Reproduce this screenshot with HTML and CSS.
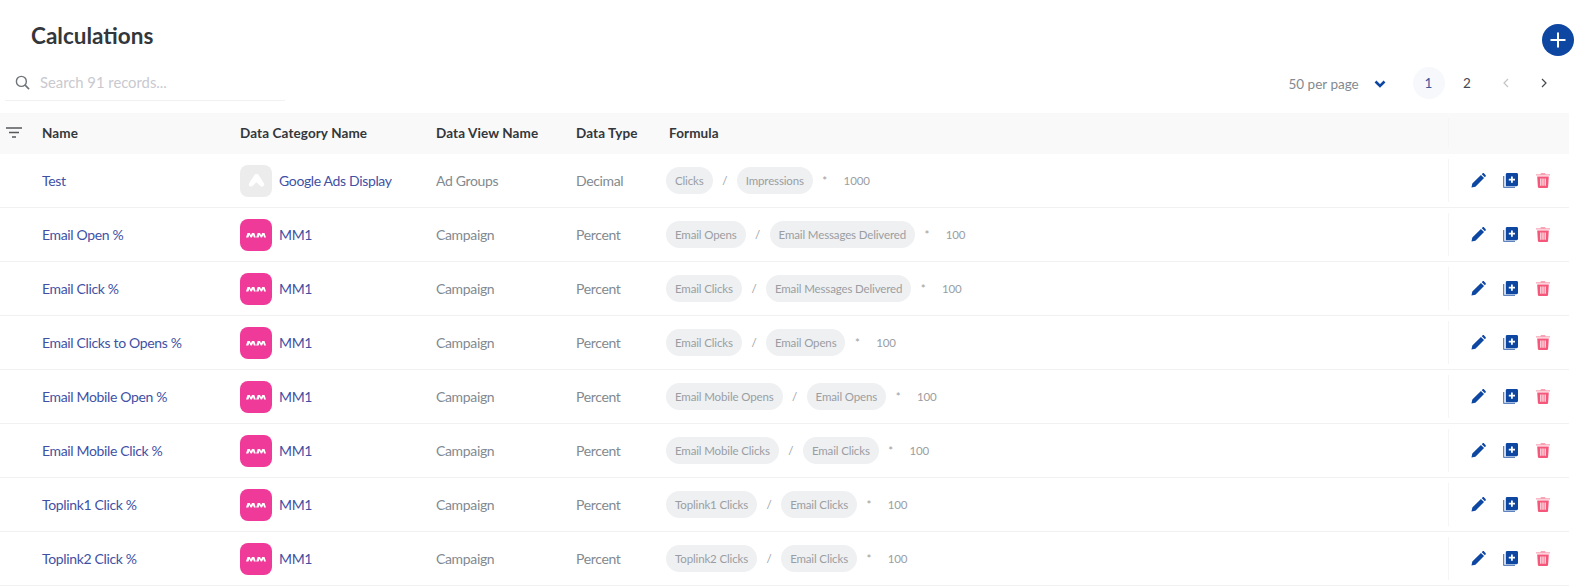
FILE: index.html
```html
<!DOCTYPE html>
<html lang="en">
<head>
<meta charset="utf-8">
<title>Calculations</title>
<link rel="stylesheet" href="styles.css">
</head>
<body>
<svg class="defs" width="0" height="0" aria-hidden="true">
  <symbol id="ic-pencil" viewBox="0 0 16 16"><path d="M0.500 15.500l0.900-4.200L10.600 2.100l3.300 3.300-9.200 9.200zM11.500 1.200l0.700-0.700c0.500-0.500 1.300-0.500 1.800 0l1.500 1.500c0.500 0.500 0.500 1.300 0 1.800l-0.700 0.700z" fill="currentColor"/></symbol>
  <symbol id="ic-copy" viewBox="0 0 15 15"><path d="M0 3h1.300v10.700H12V15H1.300C0.600 15 0 14.400 0 13.700z" fill="#5f83c0"/><path d="M4.200 0h9.400C14.400 0 15 0.600 15 1.400v10.400c0 0.800-0.600 1.400-1.400 1.400H2.800V1.400C2.800 0.600 3.400 0 4.200 0z" fill="currentColor"/><path d="M8 3.500h1.800v2.200H12v1.800H9.800v2.200H8V7.500H5.800V5.700H8z" fill="#fff"/></symbol>
  <symbol id="ic-trash" viewBox="0 0 14 15"><path d="M5 0h4l0.600 1.200H14v1.400H0V1.200h4.400z" fill="#f7a3b5"/><path d="M1.200 3.600h11.600l-0.700 10.100c-0.100 0.700-0.600 1.300-1.300 1.300H3.200c-0.700 0-1.200-0.600-1.300-1.300z" fill="currentColor"/><path d="M4.300 5.500h1.100v7.300H4.300zM6.450 5.500h1.100v7.300H6.450zM8.600 5.500h1.100v7.300H8.600z" fill="#fff"/></symbol>
  <symbol id="ic-mm" viewBox="0 0 32 32"><rect width="32" height="32" rx="8" fill="#ef3a9a"/><path d="M6 18.500L7.500 14h2.300l1.100 2.200L12 14h2.300l1.500 4.500h-1.900l-0.800-2.500-1.300 2.500h-1.200L9.300 16l-0.900 2.500zM16.200 18.500l1.500-4.500H20l1.100 2.200 1.100-2.200h2.300l1.500 4.500h-1.900l-0.800-2.500-1.300 2.500h-1.200L19.500 16l-0.900 2.500z" fill="#fff"/></symbol>
  <symbol id="ic-ads" viewBox="0 0 32 32"><rect width="32" height="32" rx="8" fill="#ececec"/><path d="M16.500 9c1 0 1.800 0.500 2.300 1.300l5 8c0.800 1.200 0.400 2.400-0.600 3-1 0.600-2.200 0.300-3-0.600l-3.700-3.400-3.700 3.400c-0.800 0.900-2 1.200-3 0.600-1-0.600-1.400-1.800-0.600-3l5-8c0.500-0.800 1.300-1.300 2.300-1.300z" fill="#fff"/></symbol>
</svg>

<main class="page">
  <header class="top">
    <h1 class="title">Calculations</h1>
    <button class="add" type="button" aria-label="Add">
      <svg width="16" height="16" viewBox="0 0 16 16"><path d="M7 0.500h2V7h6.500v2H9v6.500H7V9H0.500V7H7z" fill="#fff"/></svg>
    </button>
  </header>

  <div class="toolbar">
    <label class="search">
      <svg class="search-icon" width="15" height="15" viewBox="0 0 16 16"><circle cx="6.800" cy="6.800" r="5.300" fill="none" stroke="#6e7478" stroke-width="1.500"/><path d="M10.800 10.800l4.200 4.200" stroke="#6e7478" stroke-width="1.700" fill="none"/></svg>
      <span class="search-text">Search 91 records...</span>
    </label>
    <div class="pager">
      <span class="per-page">50 per page</span>
      <svg class="caret" width="12" height="8" viewBox="0 0 12 8"><path d="M1.500 1.500L6 6l4.500-4.500" fill="none" stroke="#0d47a1" stroke-width="2.600"/></svg>
      <span class="page-no current">1</span>
      <span class="page-no">2</span>
      <span class="page-no arrow disabled"><svg width="6" height="10" viewBox="0 0 6 10"><path d="M5 1L1 5l4 4" fill="none" stroke="currentColor" stroke-width="1.200"/></svg></span>
      <span class="page-no arrow"><svg width="6" height="10" viewBox="0 0 6 10"><path d="M1 1l4 4-4 4" fill="none" stroke="currentColor" stroke-width="1.200"/></svg></span>
    </div>
  </div>

  <section class="table">
    <div class="row head">
      <div class="c-filter"><svg width="16" height="11" viewBox="0 0 16 11"><path d="M0 1h16M3 5.500h10M6 10h4" stroke="#55595c" stroke-width="1.300" fill="none"/></svg></div>
      <div>Name</div><div>Data Category Name</div><div>Data View Name</div><div>Data Type</div><div class="c-formula-head">Formula</div><div class="c-actions"></div>
    </div>

    <div class="row">
      <div></div><div class="name">Test</div>
      <div class="cat"><svg class="logo"><use href="#ic-ads"/></svg>Google Ads Display</div>
      <div class="muted">Ad Groups</div><div class="muted">Decimal</div>
      <div class="formula"><span class="chip">Clicks</span><span class="op">/</span><span class="chip">Impressions</span><span class="op">*</span><span class="num">1000</span></div>
      <div class="c-actions"><svg class="act edit"><use href="#ic-pencil"/></svg><svg class="act copy"><use href="#ic-copy"/></svg><svg class="act del"><use href="#ic-trash"/></svg></div>
    </div>
    <div class="row">
      <div></div><div class="name">Email Open %</div>
      <div class="cat"><svg class="logo"><use href="#ic-mm"/></svg>MM1</div>
      <div class="muted">Campaign</div><div class="muted">Percent</div>
      <div class="formula"><span class="chip">Email Opens</span><span class="op">/</span><span class="chip">Email Messages Delivered</span><span class="op">*</span><span class="num">100</span></div>
      <div class="c-actions"><svg class="act edit"><use href="#ic-pencil"/></svg><svg class="act copy"><use href="#ic-copy"/></svg><svg class="act del"><use href="#ic-trash"/></svg></div>
    </div>
    <div class="row">
      <div></div><div class="name">Email Click %</div>
      <div class="cat"><svg class="logo"><use href="#ic-mm"/></svg>MM1</div>
      <div class="muted">Campaign</div><div class="muted">Percent</div>
      <div class="formula"><span class="chip">Email Clicks</span><span class="op">/</span><span class="chip">Email Messages Delivered</span><span class="op">*</span><span class="num">100</span></div>
      <div class="c-actions"><svg class="act edit"><use href="#ic-pencil"/></svg><svg class="act copy"><use href="#ic-copy"/></svg><svg class="act del"><use href="#ic-trash"/></svg></div>
    </div>
    <div class="row">
      <div></div><div class="name">Email Clicks to Opens %</div>
      <div class="cat"><svg class="logo"><use href="#ic-mm"/></svg>MM1</div>
      <div class="muted">Campaign</div><div class="muted">Percent</div>
      <div class="formula"><span class="chip">Email Clicks</span><span class="op">/</span><span class="chip">Email Opens</span><span class="op">*</span><span class="num">100</span></div>
      <div class="c-actions"><svg class="act edit"><use href="#ic-pencil"/></svg><svg class="act copy"><use href="#ic-copy"/></svg><svg class="act del"><use href="#ic-trash"/></svg></div>
    </div>
    <div class="row">
      <div></div><div class="name">Email Mobile Open %</div>
      <div class="cat"><svg class="logo"><use href="#ic-mm"/></svg>MM1</div>
      <div class="muted">Campaign</div><div class="muted">Percent</div>
      <div class="formula"><span class="chip">Email Mobile Opens</span><span class="op">/</span><span class="chip">Email Opens</span><span class="op">*</span><span class="num">100</span></div>
      <div class="c-actions"><svg class="act edit"><use href="#ic-pencil"/></svg><svg class="act copy"><use href="#ic-copy"/></svg><svg class="act del"><use href="#ic-trash"/></svg></div>
    </div>
    <div class="row">
      <div></div><div class="name">Email Mobile Click %</div>
      <div class="cat"><svg class="logo"><use href="#ic-mm"/></svg>MM1</div>
      <div class="muted">Campaign</div><div class="muted">Percent</div>
      <div class="formula"><span class="chip">Email Mobile Clicks</span><span class="op">/</span><span class="chip">Email Clicks</span><span class="op">*</span><span class="num">100</span></div>
      <div class="c-actions"><svg class="act edit"><use href="#ic-pencil"/></svg><svg class="act copy"><use href="#ic-copy"/></svg><svg class="act del"><use href="#ic-trash"/></svg></div>
    </div>
    <div class="row">
      <div></div><div class="name">Toplink1 Click %</div>
      <div class="cat"><svg class="logo"><use href="#ic-mm"/></svg>MM1</div>
      <div class="muted">Campaign</div><div class="muted">Percent</div>
      <div class="formula"><span class="chip">Toplink1 Clicks</span><span class="op">/</span><span class="chip">Email Clicks</span><span class="op">*</span><span class="num">100</span></div>
      <div class="c-actions"><svg class="act edit"><use href="#ic-pencil"/></svg><svg class="act copy"><use href="#ic-copy"/></svg><svg class="act del"><use href="#ic-trash"/></svg></div>
    </div>
    <div class="row">
      <div></div><div class="name">Toplink2 Click %</div>
      <div class="cat"><svg class="logo"><use href="#ic-mm"/></svg>MM1</div>
      <div class="muted">Campaign</div><div class="muted">Percent</div>
      <div class="formula"><span class="chip">Toplink2 Clicks</span><span class="op">/</span><span class="chip">Email Clicks</span><span class="op">*</span><span class="num">100</span></div>
      <div class="c-actions"><svg class="act edit"><use href="#ic-pencil"/></svg><svg class="act copy"><use href="#ic-copy"/></svg><svg class="act del"><use href="#ic-trash"/></svg></div>
    </div>
  </section>
</main>
</body>
</html>
```

FILE: styles.css
```css
* { box-sizing: border-box; }
html, body { margin: 0; height: 100%; overflow: hidden; background: #fff; }
body { font-family: "Lato", "Noto Sans", sans-serif; color: #33373b; }
.defs { position: absolute; }
.page { width: 1578px; }

.top { height: 64px; display: flex; justify-content: space-between; padding: 24px 4px 0 31px; }
.title { margin: 0; font-size: 22.500px; line-height: 24px; font-weight: 700; color: #33373b; }
.add { width: 32px; height: 32px; padding: 0; border: 0; border-radius: 50%; background: #0d47a1; display: flex; align-items: center; justify-content: center; }

.toolbar { height: 49px; display: flex; justify-content: space-between; padding-left: 5px; }
.search { width: 280px; height: 37px; display: flex; align-items: center; gap: 10px; padding-left: 10px; border-bottom: 1px solid #f1f1f1; }
.search-text { font-size: 14.800px; color: #c9c9cf; }
.search-icon { flex: none; }
.pager { display: flex; height: 38px; align-items: center; padding-right: 18px; }
.per-page { font-size: 13.500px; color: #828a90; width: 85px; padding-top: 2px; }
.caret { margin-right: 27px; margin-top: 1px; }
.page-no { width: 32px; height: 32px; margin-right: 6.500px; border-radius: 50%; display: flex; align-items: center; justify-content: center; font-size: 13.500px; color: #444a50; }
.page-no:last-child { margin-right: 0; }
.page-no.current { background: #f6f8fb; color: #3a5aa0; }
.arrow.disabled { color: #c4c4c4; }

.row { display: grid; grid-template-columns: 42px 198px 196px 140px 90px 782px 130px; height: 54px; align-items: center; border-bottom: 1px solid #f1f1f1; width: 1569px; font-size: 14px; letter-spacing: -0.350px; color: #828a90; }
.row.head { height: 41px; padding-bottom: 2px; background: #f9f9f9; border-bottom: 0; font-size: 13.500px; letter-spacing: 0.100px; font-weight: 700; color: #33373b; }
.c-filter { display: flex; padding-left: 6px; }
.c-formula-head { padding-left: 3px; }
.c-actions { align-self: stretch; margin: 5px 0; padding-left: 22px; border-left: 1px solid #f5f5f5; display: flex; align-items: center; }
.name { color: #3f51a5; }
.cat { display: flex; align-items: center; gap: 7px; color: #3f51a5; }
.logo { width: 32px; height: 32px; flex: none; }
.formula { display: flex; align-items: center; font-size: 11.500px; letter-spacing: -0.140px; color: #9a9ea2; }
.chip { height: 27px; padding: 0 9px; border-radius: 14px; background: #eff0f2; display: flex; align-items: center; }
.op { margin: 0 9.500px; }
.num { margin-left: 7px; }
.act { flex: none; }
.edit { width: 15px; height: 15px; color: #0d47a1; margin-right: 17px; }
.copy { width: 15px; height: 15px; color: #0d47a1; margin-right: 18px; }
.del { width: 14px; height: 15px; color: #f5577a; }
```
